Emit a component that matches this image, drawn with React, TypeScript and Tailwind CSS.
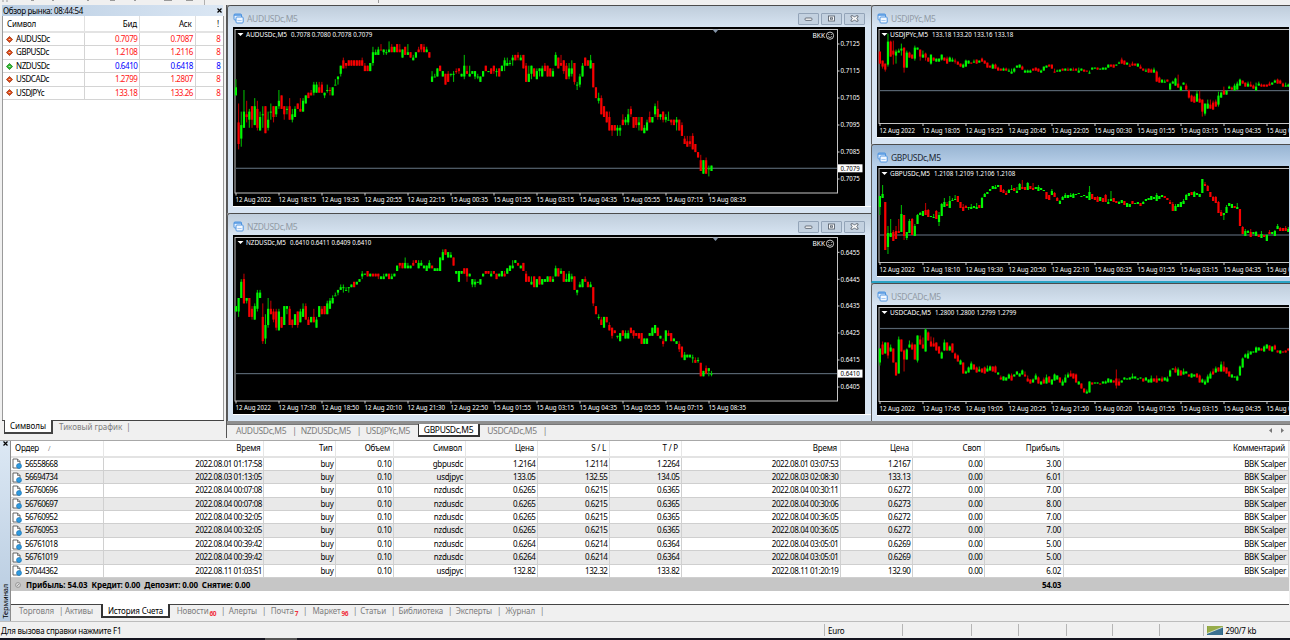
import { Fragment, type ReactNode } from 'react'

interface Candle {
  up: boolean
  high: number
  top: number
  bottom: number
  low: number
}

interface ChartProps {
  symbol: string
  symbolWidth: number
  prices: string
  width: number
  height: number
  plotRight: number
  plotBottom: number
  priceY: number
  unit: number
  candles: string
  times: string[]
  scale?: { label: string; y: number }[]
  current?: string
}

// each token: colour, then high,[body top],[body bottom],[low] relative to the current price
const AUDUSD = `g33,30,27,27 r24,17,9,7 g21,16,11,8 g29,21,15 r25,20,19,17 g22,21,18,15 r23,23,18,15 g26,23,16 r25,22,15,14 g21,19,14
g23,20,20,15 r23,13 g21,18,15,14 g24,21,21,18 r23,23,19,17 g23,23,20,19 g29,25,23,22 r27,22 r23,23,20,18 g23,22,22,20
r26,23,18 g22,20,18,17 g23,22,19 r24,22 r26,22,21 g26,25,21 g27,24 r28,26 r29,28,27 g32,31,28,27
g32,31,28 r32,30,28 r32,31,28 g28,28,27,26 g31,29,29,28 r30,29,29,27 g30,27 g33,31,31 g34,34,33,31 g38,38,35,34
r41,40,37 r39,39,38,37 r40,38 r40,38 r40,38 r40,38 r40,38 r41,40,38 r39,38,36 r38,36
g39,36 g45,43,39,38 g44,43,42 g45,44,42 r46,44,44 g44,44,43,42 g44,43,43,42 g47,44,43 r46,45,43 g45,43
r46,43 r46,44,43 g44,41 r45,42 g46,43,42 r43,41 g42,41,40 g43,41 r45,44,43 r46,46,44,43
r46,45,43 g45,44,43 r43,41 g36,34,32 g35,34,34 g37,34 r38,36 g36,34 r35,31 r36,35,32
g35,35,35,34 g36,35,35,32 r37,36,36,35 r37,37,36,35 g35,34 g42,38,34,33 r38,36,35 g38,35,34 g36,35 g36,36,34,33
g35,34,34,33 g34,32 g36,34 r38,36 g36,36 r37,35 r38,38,36,35 g37,36,36,34 r37,34 g38,36
g41,40,38,36 g41,39,38 g40,39,39,38 g42,41,40,38 r42,40 r43,42,41,40 g42,41,40 r42,37 r39,38,32 g38,35,32
g38,38,35,33 r37,34 g37,36,33 g37,37,36,34 g38,37,34 r39,38,36 r38,34 r37,34 g37,36,34 g43,42,38
r41,37 r42,39,38 r40,40,36,35 r39,38,33 g39,37,34,33 g40,37,35,34 r39,39,32,31 g32,31,31,29 g35,34,31,30 g39,38,34
r41,38 r40,38 g42,40,37 r39,30 r30,26 g28,26,25,24 r27,26,20 r23,19 r21,17 r21,19,14
r16,16,14,12 r16,14 g16,15,14,12 g16,15,14,12 r20,18,16 g19,18,17,16 g22,20,17,16 r23,22,20,19 r19,15 r19,19,16,15
g19,17,16,14 r19,14 g16,15,13 g18,17,14 r21,19,17 g19,17 g24,23,20,19 r25,22,19,18 g20,20,19,18 r21,21,18,17
g20,19,18,17 g21,18,18 r18,18,17,16 r18,16 g19,18,17,14 r18,14 r17,16,12 r12,11,9 r12,10,8 r12,10,9,8
r13,12,7 r9,6 r6,4 r5,3,-1 g3,-2 r4,3,-2 g1,0,0,-3 g1,-1`

const NZDUSD = `g25,23 g28,28,23,21 g35,34,28 r37,35,26 g28,28,27,26 r28,21 r25,24,21,20 g26,25,20 g31,30,24,23 g31,30,28
r26,21,12,11 g22,18,13,11 g28,24,18,17 r27,24,22 r24,23,20,19 r24,23,17,16 g24,23,16 r21,17 g25,18 g25,25,24,22
r25,24,18 r20,20,18,17 g22,18 r23,23,18,17 g24,23,19 g26,24,21 r26,25,20 r21,20,18 g21,19 r24,21,19
g21,20,17 g25,21 r25,24,22 r25,22 g27,26,22 g28,27,24 g29,28,26 g30,29,29 g31,31,30,29 g33,32,31
g33,32,32,30 g32,31,31 g32,32,32,30 g33,32 r34,32 g34,33 g35,34 g38,37,36,35 g37,37 r38,36
g37,36 r37,36 r37,36 r37,37,36,35 g36,35 g37,36,35 g37,36 r37,35 g37,36,35 g37,36
g40,38 r41,41,40,39 r41,39 g43,41,39 g41,40,39 g40,39 r42,41,40 r42,41 g42,41,39 g42,41,40
g40,39 g40,38 g42,41,39 r40,39 g39,38 g39,38 g43,38 g46,45,42 r46,44 g45,43
g45,44,43 r43,40 g38,37 g38,34 g38,37 r39,37 r39,39,36,34 g37,36 g35,35,33,32 g35,34,33,32
g34,34 g35,33 g37,36 r38,37 r38,37 g38,37,36 r38,37 r37,35 g37,36 g38,36
r38,37,36 g39,37 g40,38 g42,40,39 g42,41 r41,40 g40,39 r41,38 r38,37,34 r36,34
g36,34,33 r36,32 g35,32 r36,33 g35,33 g35,34 g36,34 r36,34 g36,35,34 g40,39,36
r39,36 g39,38,37 r38,34 g37,35,34 g38,37,34 g37,36,35,34 r36,31 g31,31,30,29 g34,33,32 g35,32
r36,35,34 r34,32 g34,33,32 r32,32,26,25 r25,22 g22,21,21,20 r21,20,18 g21,17 r21,19 r19,18,16
r17,17,14,13 r16,15 g14,14,14,13 g15,12 r16,14 g16,15,13 g16,15,13 r17,15 r16,16,14,13 r15,14
r15,13 r15,11 g13,11 g13,11 g15,14 g17,14 g18,15 r17,14 g14,13 r13,12,11,10
g16,12 r16,15,14 r15,12 g13,12 g12,11 r12,11,9,8 r10,6 g8,7,5 g7,6 g7,6
g7,6,6,4 r6,5,4 g6,5,5,4 r4,-1 g1,-1 r3,2,0 g2,2,1,-1 g1,0,0,-1`

const USDJPY = `r39,27 r30,30,24,22 r27,27,21,19 g57,49,26,24 r50,49,34 r50,40,36,26 g41,39,35,27 g42,40,38 g47,42,40,35 r43,43,23,18
g40,38,23 r39,38,33 r36,32 g45,43,32,30 g43,41 r41,41,34,30 g40,36,33 r38,37,33,30 r33,29 g36,36,27,26
r33,30 g32,29 g32,29 g36,36,31,30 r33,30 r34,32,27 g34,33,29 g33,31,29 r32,30,29,27 r29,26
r27,24 g27,26,23 g31,30,24 g30,27 r28,27 g31,29,28 r31,27 g30,28 r33,32,29 r30,27
r28,23 r25,23 g27,26,22 r27,26,22 r24,23,20 r22,20 g23,22,20 r23,22,20 g22,20,19 g22,19,17
g23,22,19,18 g25,23 g26,23 r25,24,21 g21,20,18 g21,20,18 g21,20,18 r22,20 r23,20 r22,19
g21,20,18 g24,20 g25,23 r26,24 r26,22 r22,19,18 g21,20,19 g21,19 r22,20 g22,20
r23,21,20 g22,20 r23,21,20 r22,20 g23,20,18 g22,20 r21,19 r20,19 g20,18,17 g23,21
g23,22 r23,21 g22,21 g23,21 g23,21 g26,23 r26,24 r26,23 g26,25 g29,28,27
r33,31,27 r30,26 g28,26 r27,25,24 r29,27,25 r27,25 g27,24 r26,24,22 r22,20 g22,20,19
r22,18 r22,21,18 g23,21,18 r20,19,9 r14,13,8 g11,8 g11,9,8 r11,9 g8,7,1 g10,9,7
g13,12,5 r16,7,3 g5,4,0 g8,6 r7,5,1 r1,0,-7,-8 r-4,-5,-11 r-5,-6,-12 g0,-3,-11 r0,-8,-12
r-9,-9,-21,-26 g-13,-13,-23,-25 g-9,-13,-18 r-9,-14,-18 r-10,-12,-19 r-9,-11,-16 g-1,-5,-14,-16 g-1,-2,-7 r4,0,-4 g0,-4
g5,4,2 r4,3,1 g7,5,0 g9,7,1 g12,11,5 r10,7 r8,4 g9,7,4 r9,6,4 r6,5,2
g8,4,0 g9,7,5 r7,6,4 r6,4 r6,4 r9,7,5 g8,6 g11,10,8 r12,11,7 r11,10,7
r8,7,4 g8,5,4 g7,6,4`

const GBPUSD = `g39,39,28,20 g50,41,37 r33,33,-15 g9,2,-12,-19 g16,2,-2 r5,3,-6 r9,4,-4 r16,4,2 g30,21,3 r20,20,-1,-5
g3,3,-3,-5 g16,14,2 r17,16,0 g11,9,-1 g21,20,11 g23,22,20 g24,19 r32,25,20 r26,25,18 g19,18
g21,18,17 r25,24,16 g23,20,13,9 g32,31,19 g37,33,28 r33,31,29 g39,34,27 g37,35,34 g40,36,35 r39,33
r33,27 r31,28,24 r30,29,27 g28,28,27,25 g31,28,26 g29,27 g32,28,26 r30,27 g38,37,27 g42,41,38
g43,41 g46,44 g49,46 g50,48,46 g50,48 r50,43 r46,45,42 r44,42,40 g46,45,42 g50,46,45
r47,44 g48,44,42 g52,51,45 r55,48,46 r48,45 g53,52,45 r49,46 r52,47,45 g48,46 g50,48,44
g47,45 g45,44 r43,36 r40,35 g46,44,40 r43,42,38 r38,37,34 g35,34,31 g39,38,35 g42,40,37
g40,37 g42,40,38 g42,41,37 g41,40 g42,41 g39,38 g40,39 g39,37 g49,43,35 r41,36
r38,35 r39,38,33 g38,34 r37,33 r41,40,33 g36,33,31 g44,36,34 r37,33 r34,32 g34,33,31
g35,32 r34,30 g32,28 g31,28 r34,31 g32,31 g33,31 r32,29 g34,33,31 g36,34
g37,35 g39,35 g38,36 g42,40,34 g39,36 g40,38 r39,37 r37,35 r35,33,31 r33,31,24
g31,29,24 g31,28 g33,28 g36,34,31 g41,40,35 g42,39 r43,40 g44,43,38 g42,40 g41,38
g56,56,42 r53,51,49 r50,49,44 r43,38 r39,38,34 r39,38,32 r34,33,22 r25,23,19 g22,22,20,15 g30,28,22
g32,29 g31,27 r29,27 g32,28,26 r26,9 r9,8,1 g6,4,-1 g5,4,2 r6,3,-2 g3,1
g4,3,-1 r1,0,-2 g4,1,-3 r0,-2 g1,0,-6 r5,3,1 g3,1 g5,4,-1 g11,9,6 r8,7,4
r7,4 r9,7,4 g8,6,3`

const USDCAD = `g-20,-20,-34,-37 r-13,-16,-26 g-14,-25 r-14,-14,-27,-30 g-16,-19,-23 r-20,-34 r-34,-47 g-8,-11,-45 r-11,-23 r-21,-22,-31,-43
g-20,-21,-31 g-12,-16,-19 r-14,-16,-21 r-16,-31 g-7,-7,-32,-34 r-7,-11,-16 r-9,-16,-20 g0,-1,-23 r-3,-4,-12 r-8,-13,-18
r-9,-15,-18 r-14,-22 r-18,-25 g-23,-24,-30 g-11,-14,-22 r-14,-22 g-17,-18,-22 r-15,-24 r-24,-25,-30 r-26,-27,-33
g-31,-32,-36 r-34,-45 g-42,-43,-45 g-38,-39,-44 g-33,-35,-41 r-36,-41 r-38,-39,-44 g-38,-41,-43 r-40,-44 r-38,-39,-45
g-37,-40,-43 g-37,-38,-42 r-38,-43 r-37,-38,-44 g-44,-46 r-47,-49,-51 g-48,-52 g-49,-52 g-45,-46,-50 r-45,-47,-52
g-46,-48 g-43,-46 g-45,-48 g-41,-42,-46 r-43,-46,-48 r-47,-50,-53 r-51,-55 g-50,-51,-54 g-45,-47,-51 r-48,-49,-55
g-53,-56 r-49,-51,-55 g-46,-49,-55 r-48,-54 g-51,-56 g-45,-46,-52 g-47,-51 r-49,-54 g-51,-53,-57 g-46,-49,-54
g-44,-46,-49 r-42,-45,-48 r-45,-50 r-45,-46,-54 g-53,-56 r-55,-60 r-60,-64 g-61,-63,-65 g-53,-64 r-54,-56
g-54,-55 g-54,-55 r-55,-56 g-53,-55 g-52,-53,-55 g-50,-54 g-51,-54 r-52,-54 r-41,-50,-57,-60 r-50,-53,-57
g-52,-54 g-49,-51 g-50,-51 g-49,-51 g-45,-48,-50 g-48,-50 g-50,-51 g-49,-50 r-50,-53 g-49,-52
g-51,-54 g-47,-50,-54 r-50,-53 r-47,-50,-54 g-50,-52 r-48,-50,-53 g-49,-52 g-48,-50,-53 g-41,-42,-48 g-40,-41
r-38,-40,-44 g-39,-41,-47 r-42,-47 g-40,-43,-46 g-43,-45 r-46,-48 g-45,-49 g-46,-48 r-45,-49 r-46,-47,-54
g-50,-51,-54 g-51,-53,-56 g-46,-48,-54 g-43,-45,-50 r-40,-43,-46 g-38,-40,-44 r-39,-43 g-33,-36,-43 r-33,-38,-43 r-39,-45
r-43,-48 g-46,-49 g-48,-49 g-47,-48,-52 g-37,-38,-47 g-29,-30,-39 g-25,-26,-29 g-22,-25,-30 g-23,-26 g-23,-24
g-18,-19,-24 g-19,-22 r-20,-22 g-17,-18,-23 g-16,-20 r-17,-22 g-18,-23 r-16,-17,-21 r-22,-24 g-22,-25
r-23,-24 r-22,-24 r-20,-22`

function parseCandles(source: string): Candle[] {
  return source.split(/\s+/).map((token) => {
    const n = token.slice(1).split(',').map(Number)
    const up = token[0] === 'g'
    if (n.length === 2) return { up, high: n[0], top: n[0], bottom: n[1], low: n[1] }
    if (n.length === 3) return { up, high: n[0], top: n[1], bottom: n[2], low: n[2] }
    return { up, high: n[0], top: n[1], bottom: n[2], low: n[3] }
  })
}

function Chart(props: ChartProps) {
  const { width, height, plotRight, plotBottom, priceY, unit } = props
  const y = (v: number) => priceY - v * unit

  return (
    <svg
      width={width}
      height={height}
      viewBox={`0 0 ${width} ${height}`}
      className="block bg-black font-['Noto_Sans',sans-serif] text-[7.2px]"
    >
      <rect x="2" y="2.5" width={plotRight - 2} height={plotBottom - 2.5} fill="none" stroke="#c4c4c4" />
      <rect x="2.5" y={priceY - 0.6} width={plotRight - 3} height="1.2" fill="#56636f" />
      {parseCandles(props.candles).map((c, i) => {
        const x = 2.9 + i * 2.687
        return (
          <Fragment key={i}>
            <rect x={x - 0.55} y={y(c.high)} width="1.1" height={Math.max((c.high - c.low) * unit, 1)} fill={c.up ? '#00b400' : '#b40000'} />
            <rect x={x - 1.1} y={y(c.top)} width="2.2" height={Math.max((c.top - c.bottom) * unit, 1)} fill={c.up ? '#00f800' : '#f80000'} />
          </Fragment>
        )
      })}
      <path d="M4.5 6h6l-3 3z" fill="#fff" />
      <text x="13" y="10.4" fill="#fff" fontSize="7" textLength={props.symbolWidth} lengthAdjust="spacingAndGlyphs">{props.symbol}</text>
      <text x={props.symbolWidth + 17} y="10.4" fill="#fff" fontSize="7" textLength="81.3" lengthAdjust="spacingAndGlyphs">{props.prices}</text>
      {props.times.map((time, i) => (
        <Fragment key={time}>
          <rect x={2.5 + i * 43} y={plotBottom} width="1" height="2.5" fill="#d0d0d0" />
          <text x={2.4 + i * 43} y={plotBottom + 9} fill="#fff" textLength={i === 0 ? 35.6 : 37.6} lengthAdjust="spacingAndGlyphs">{time}</text>
        </Fragment>
      ))}
      {props.scale && (
        <>
          <path d="M479.5 2.5h6l-3 3.5z" fill="#8494a8" />
          <text x="579.5" y="11" fill="#fff" fontSize="7" textLength="12.5" lengthAdjust="spacingAndGlyphs">BKK</text>
          <circle cx="597" cy="8.7" r="3.6" fill="none" stroke="#ddd" strokeWidth="0.9" />
          <path d="M595.3 7.5h1M597.8 7.5h1M595 9.5q2 2.2 4 0" fill="none" stroke="#ddd" strokeWidth="0.8" />
          {props.scale.map((s) => (
            <Fragment key={s.label}>
              <rect x={plotRight} y={s.y - 0.5} width="2" height="1" fill="#d0d0d0" />
              <text x="607.5" y={s.y + 2.3} fill="#fff" textLength="19.2" lengthAdjust="spacingAndGlyphs">{s.label}</text>
            </Fragment>
          ))}
          <rect x="605" y={priceY - 4} width="24.5" height="8" fill="#fff" />
          <text x="607.5" y={priceY + 2.5} fill="#000" textLength="19.2" lengthAdjust="spacingAndGlyphs">{props.current}</text>
        </>
      )}
    </svg>
  )
}

function WindowIcon() {
  return (
    <svg width="11" height="11" viewBox="0 0 11 11" className="shrink-0">
      <rect x="1" y="1" width="7.5" height="6" rx="1" fill="#eaf3ff" stroke="#4e94e0" />
      <path d="M1 2h7.5" stroke="#4e94e0" strokeWidth="1.3" />
      <rect x="3" y="4" width="7.2" height="6" rx="1" fill="#f3f8ff" stroke="#4e94e0" />
      <path d="M4.5 7l1 1 1-1 1 1 1-1" stroke="#6fa8e8" strokeWidth="0.7" fill="none" />
    </svg>
  )
}

function WindowButton({ children }: { children: ReactNode }) {
  return (
    <div className="flex h-3 w-[21.5px] items-center justify-center rounded-[1px] border border-[#93a4b8] bg-[#c3d1e0]">
      <svg width="9" height="7" viewBox="0 0 9 7" fill="#f8f8f8" stroke="#5b6470" strokeWidth="0.9">{children}</svg>
    </div>
  )
}

function ChartWindow({ title, active, controls, className, children }: { title: string; active?: boolean; controls?: boolean; className: string; children: ReactNode }) {
  return (
    <div
      className={`flex flex-col overflow-hidden rounded-tl-[4px] border-t border-l border-t-[#4c4c4c] border-l-[#5a5a5a] ${
        active ? 'bg-[#b9d1ea]' : 'bg-[#d7e4f2]'
      } ${className}`}
    >
      <div
        className={`flex h-[20.5px] shrink-0 items-center bg-linear-to-b pt-[5px] pr-[6px] pl-[5px] ${
          active ? 'from-[#98b4d2] to-[#b9d1ea]' : 'from-[#bfcddb] to-[#d7e4f2]'
        }`}
      >
        <WindowIcon />
        <span className={`ml-[3px] flex-1 text-[8.5px] leading-[12px] tracking-[-0.32px] ${active ? 'text-[#1c2733]' : 'text-[#929ba5]'}`}>{title}</span>
        {controls && (
          <div className="flex gap-[1.5px]">
            <WindowButton><rect x="1" y="3" width="7" height="2.4" rx="1" /></WindowButton>
            <WindowButton><rect x="1.5" y="1" width="6" height="5" /><rect x="3.5" y="2.8" width="2" height="1.4" /></WindowButton>
            <WindowButton><path d="M1 .8h2.200l1.300 1.400L5.800.8H8v1.400L6.600 3.500 8 4.800v1.400H5.800L4.500 4.800 3.200 6.200H1V4.800l1.400-1.300L1 2.200z" /></WindowButton>
          </div>
        )}
      </div>
      <div className="ml-[5px] shrink-0 overflow-hidden border-b border-b-white">{children}</div>
    </div>
  )
}

const quotes = [
  { symbol: 'AUDUSDc', bid: '0.7079', ask: '0.7087', up: false },
  { symbol: 'GBPUSDc', bid: '1.2108', ask: '1.2116', up: false },
  { symbol: 'NZDUSDc', bid: '0.6410', ask: '0.6418', up: true },
  { symbol: 'USDCADc', bid: '1.2799', ask: '1.2807', up: false },
  { symbol: 'USDJPYc', bid: '133.18', ask: '133.26', up: false },
]

function MarketWatch() {
  return (
    <div className="flex w-[226px] shrink-0 flex-col bg-[#f0f0f0] pl-[2px]">
      <div className="flex h-[11px] w-[221px] items-center justify-between bg-linear-to-r from-[#b9cde2] to-[#dbe7f4] pr-[1px] pl-[1px] text-[8px] tracking-[-0.32px]">
        <span>Обзор рынка: 08:44:54</span>
        <svg width="5" height="5" viewBox="0 0 5 5" stroke="#000" strokeWidth="1.2"><path d="M.5.5l4 4M4.500.5l-4 4" /></svg>
      </div>
      <div className="flex w-[222px] flex-1 flex-col border-x border-[#9a9a9a] bg-white">
        <div className="grid h-[17px] grid-cols-[81.500px_55.500px_55.500px_1fr] border-b-2 border-[#e3e3e3] text-right text-[8px] leading-[15px] tracking-[-0.2px]">
          <span className="border-r border-[#e0e0e0] pl-1 text-left">Символ</span>
          <span className="border-r border-[#e0e0e0] pr-[2px]">Бид</span>
          <span className="border-r border-[#e0e0e0] pr-[3px]">Аск</span>
          <span className="pr-1">!</span>
        </div>
        {quotes.map((q) => (
          <div
            key={q.symbol}
            className={`grid h-[13.4px] grid-cols-[81.500px_55.500px_55.500px_1fr] border-b border-[#d4d4d4] text-right text-[8px] leading-[12.500px] tracking-[-0.42px] ${q.up ? 'text-[#0000ff]' : 'text-[#ff1414]'}`}
          >
            <span className="flex items-center border-r border-[#d4d4d4] pl-[2.500px] text-black">
              <svg width="7" height="7" viewBox="0 0 8 8" className="mr-[3.500px]">
                <path d="M4 .5L7.500 4 4 7.500.5 4z" fill={q.up ? '#2db82d' : '#dd4a16'} stroke={q.up ? '#168016' : '#9c300c'} strokeWidth="0.9" />
                <path d="M3 4h2" stroke="#fff" strokeWidth="0.8" />
              </svg>
              {q.symbol}
            </span>
            <span className="border-r border-[#d4d4d4] pr-[1.500px]">{q.bid}</span>
            <span className="border-r border-[#d4d4d4] pr-[1.500px]">{q.ask}</span>
            <span className="pr-[2.500px]">8</span>
          </div>
        ))}
      </div>
      <div className="flex h-[20px] w-[222px] items-start text-[8px] tracking-[-0.03px]">
        <div className="w-[2px] self-start border-t border-[#444] pt-3" />
        <div className="h-[14px] w-[49px] border-r-2 border-b-2 border-l border-[#444] bg-white text-center leading-[12.500px]">Символы</div>
        <div className="h-[13px] flex-1 border-t border-[#444] pl-[6px] leading-[12px] text-[#7d7d7d]">
          Тиковый график<span className="ml-[4px] text-[#777]">|</span>
        </div>
      </div>
    </div>
  )
}

const bigChart = { width: 632, height: 179, plotRight: 604.5, plotBottom: 166, unit: 2.7 }
const smallChart = { width: 412, height: 110, plotRight: 430, plotBottom: 96.5, unit: 1 }

function Workspace() {
  return (
    <div className="flex h-[419px] overflow-hidden border-l border-[#555] bg-[#8f8f8f]">
      <div className="flex w-[644px] shrink-0 flex-col">
        <ChartWindow title="AUDUSDc,M5" controls className="h-[208px]">
          <Chart
            {...bigChart}
            symbol="AUDUSDc,M5"
            symbolWidth={41}
            prices="0.7078 0.7080 0.7078 0.7079"
            priceY={141.3}
            candles={AUDUSD}
            current="0.7079"
            times={['12 Aug 2022', '12 Aug 18:15', '12 Aug 19:35', '12 Aug 20:55', '12 Aug 22:15', '15 Aug 00:35', '15 Aug 01:55', '15 Aug 03:15', '15 Aug 04:35', '15 Aug 05:55', '15 Aug 07:15', '15 Aug 08:35']}
            scale={[
              { label: '0.7125', y: 17 },
              { label: '0.7115', y: 44 },
              { label: '0.7105', y: 71 },
              { label: '0.7095', y: 98 },
              { label: '0.7085', y: 125 },
              { label: '0.7075', y: 152 },
            ]}
          />
        </ChartWindow>
        <ChartWindow title="NZDUSDc,M5" controls className="h-[208px]">
          <Chart
            {...bigChart}
            symbol="NZDUSDc,M5"
            symbolWidth={40}
            prices="0.6410 0.6411 0.6409 0.6410"
            priceY={138.6}
            candles={NZDUSD}
            current="0.6410"
            times={['12 Aug 2022', '12 Aug 17:30', '12 Aug 18:50', '12 Aug 20:10', '12 Aug 21:30', '12 Aug 22:50', '15 Aug 01:55', '15 Aug 03:15', '15 Aug 04:35', '15 Aug 05:55', '15 Aug 07:15', '15 Aug 08:35']}
            scale={[
              { label: '0.6455', y: 17.3 },
              { label: '0.6445', y: 44.3 },
              { label: '0.6435', y: 71 },
              { label: '0.6425', y: 98 },
              { label: '0.6415', y: 125 },
              { label: '0.6405', y: 152 },
            ]}
          />
        </ChartWindow>
      </div>
      <div className="flex flex-1 flex-col">
        <ChartWindow title="USDJPYc,M5" className="h-[139px]">
          <Chart
            {...smallChart}
            symbol="USDJPYc,M5"
            symbolWidth={38}
            prices="133.18 133.20 133.16 133.18"
            priceY={63.6}
            candles={USDJPY}
            times={['12 Aug 2022', '12 Aug 18:05', '12 Aug 19:25', '12 Aug 20:45', '12 Aug 22:05', '15 Aug 00:30', '15 Aug 01:55', '15 Aug 03:15', '15 Aug 04:35', '15 Aug 05:55']}
          />
        </ChartWindow>
        <ChartWindow title="GBPUSDc,M5" active className="h-[139px] border-b-2 border-b-[#2aa3c4]">
          <Chart
            {...smallChart}
            symbol="GBPUSDc,M5"
            symbolWidth={40}
            prices="1.2108 1.2109 1.2106 1.2108"
            priceY={69}
            candles={GBPUSD}
            times={['12 Aug 2022', '12 Aug 18:10', '12 Aug 19:30', '12 Aug 20:50', '12 Aug 22:10', '15 Aug 00:35', '15 Aug 01:55', '15 Aug 03:15', '15 Aug 04:35', '15 Aug 05:55']}
          />
        </ChartWindow>
        <ChartWindow title="USDCADc,M5" className="h-[138px]">
          <Chart
            {...smallChart}
            symbol="USDCADc,M5"
            symbolWidth={41}
            prices="1.2800 1.2800 1.2799 1.2799"
            priceY={23.5}
            candles={USDCAD}
            times={['12 Aug 2022', '12 Aug 17:45', '12 Aug 19:05', '12 Aug 20:25', '12 Aug 21:50', '15 Aug 00:20', '15 Aug 01:55', '15 Aug 03:15', '15 Aug 04:35', '15 Aug 05:55']}
          />
        </ChartWindow>
      </div>
    </div>
  )
}

function ChartTabs() {
  return (
    <div className="flex h-[14px] border-l border-[#555] text-[8.500px] leading-[11px] tracking-[-0.36px] text-[#7d7d7d]">
      <div className="w-[69.500px] border-t border-[#777] text-right"><span className="pr-[6px]">AUDUSDc,M5</span><span>|</span></div>
      <div className="w-[64.500px] border-t border-[#777] text-right"><span className="pr-[6px]">NZDUSDc,M5</span><span>|</span></div>
      <div className="w-[57px] border-t border-[#777] text-right"><span className="pr-[8px]">USDJPYc,M5</span></div>
      <div className="h-[13px] w-[62px] border-r-2 border-b-2 border-l border-[#333] bg-white text-center leading-[12px] text-black">GBPUSDc,M5</div>
      <div className="w-[67px] border-t border-[#777] text-right"><span className="pr-[6px]">USDCADc,M5</span><span>|</span></div>
      <div className="flex flex-1 items-center justify-end gap-[9px] border-t border-[#777] pr-[6px] pb-[3px]">
        <svg width="3" height="5" viewBox="0 0 3 5"><path d="M3 0v5L0 2.500z" fill="#777" /></svg>
        <svg width="3" height="5" viewBox="0 0 3 5"><path d="M0 0v5l3-2.500z" fill="#777" /></svg>
      </div>
    </div>
  )
}

const headers = ['Ордер', 'Время', 'Тип', 'Объем', 'Символ', 'Цена', 'S / L', 'T / P', 'Время', 'Цена', 'Своп', 'Прибыль', 'Комментарий']

const orders = [
  ['56558668', '2022.08.01 01:17:58', 'buy', '0.10', 'gbpusdc', '1.2164', '1.2114', '1.2264', '2022.08.01 03:07:53', '1.2167', '0.00', '3.00', 'BBK Scalper'],
  ['56694734', '2022.08.03 01:13:05', 'buy', '0.10', 'usdjpyc', '133.05', '132.55', '134.05', '2022.08.03 02:08:30', '133.13', '0.00', '6.01', 'BBK Scalper'],
  ['56760696', '2022.08.04 00:07:08', 'buy', '0.10', 'nzdusdc', '0.6265', '0.6215', '0.6365', '2022.08.04 00:30:11', '0.6272', '0.00', '7.00', 'BBK Scalper'],
  ['56760697', '2022.08.04 00:07:08', 'buy', '0.10', 'nzdusdc', '0.6265', '0.6215', '0.6365', '2022.08.04 00:30:06', '0.6273', '0.00', '8.00', 'BBK Scalper'],
  ['56760952', '2022.08.04 00:32:05', 'buy', '0.10', 'nzdusdc', '0.6265', '0.6215', '0.6365', '2022.08.04 00:36:05', '0.6272', '0.00', '7.00', 'BBK Scalper'],
  ['56760953', '2022.08.04 00:32:05', 'buy', '0.10', 'nzdusdc', '0.6265', '0.6215', '0.6365', '2022.08.04 00:36:05', '0.6272', '0.00', '7.00', 'BBK Scalper'],
  ['56761018', '2022.08.04 00:39:42', 'buy', '0.10', 'nzdusdc', '0.6264', '0.6214', '0.6364', '2022.08.04 03:05:01', '0.6269', '0.00', '5.00', 'BBK Scalper'],
  ['56761019', '2022.08.04 00:39:42', 'buy', '0.10', 'nzdusdc', '0.6264', '0.6214', '0.6364', '2022.08.04 03:05:01', '0.6269', '0.00', '5.00', 'BBK Scalper'],
  ['57044362', '2022.08.11 01:03:51', 'buy', '0.10', 'usdjpyc', '132.82', '132.32', '133.82', '2022.08.11 01:20:19', '132.90', '0.00', '6.02', 'BBK Scalper'],
]

const orderGrid = 'grid grid-cols-[93px_160px_72px_57.500px_72px_72px_72px_72px_159px_72px_72px_79px_225px]'

const terminalTabs = [
  { label: 'Торговля', width: 'w-[51px]' },
  { label: 'Активы', width: 'w-[39px]' },
  { label: 'История Счета', width: 'w-[69px]', active: true },
  { label: 'Новости', width: 'w-[54px]', count: '60' },
  { label: 'Алерты', width: 'w-[41px]' },
  { label: 'Почта', width: 'w-[41px]', count: '7' },
  { label: 'Маркет', width: 'w-[50px]', count: '96' },
  { label: 'Статьи', width: 'w-[38px]' },
  { label: 'Библиотека', width: 'w-[57px]' },
  { label: 'Эксперты', width: 'w-[49px]' },
  { label: 'Журнал', width: 'w-[43px]' },
]

function Terminal() {
  return (
    <div className="flex h-[181px] border-t border-[#a8a8a8] text-[8px]">
      <div className="flex w-[10px] shrink-0 flex-col items-center justify-between bg-linear-to-b from-[#dce8f4] to-[#b6cadf] pb-[2px]">
        <svg width="5" height="5" viewBox="0 0 5 5" stroke="#000" strokeWidth="1.2"><path d="M.5.5l4 4M4.500.5l-4 4" /></svg>
        <span className="rotate-180 text-[7.500px] leading-[10px] tracking-[-0.2px] [writing-mode:vertical-rl]">Терминал</span>
      </div>
      <div className="flex w-[1279px] flex-col border-l border-[#8c8c8c]">
        <div className="flex h-[163px] flex-col bg-white">
          <div className={`${orderGrid} h-[16.500px] shrink-0 border-b-2 border-[#e3e3e3] text-right leading-[14.500px] tracking-[-0.2px]`}>
            {headers.map((header, i) => (
              <span key={i} className={i === 0 ? 'border-r border-[#e6e6e6] pl-1 text-left' : 'border-r border-[#e6e6e6] pr-[2.500px]'}>
                {header}
                {i === 0 && <span className="ml-[9px] text-[7px] text-[#777]">∕</span>}
              </span>
            ))}
          </div>
          {orders.map((order) => (
            <div key={order[0]} className={`${orderGrid} h-[13.4px] shrink-0 border-b border-[#cfcfcf] text-right leading-[12.400px] tracking-[-0.42px] even:bg-white odd:bg-[#e9e9e9]`}>
              {order.map((cell, i) =>
                i === 0 ? (
                  <span key={i} className="flex items-center border-r border-[#d0d0d0] pl-[1px] tracking-[-0.52px]">
                    <svg width="10" height="11" viewBox="0 0 10 11" className="mr-[3px]">
                      <path d="M1 1h4.500L8 3.500V10H1z" fill="#fff" stroke="#555" strokeWidth="0.9" />
                      <path d="M5.500 1v2.500H8" fill="none" stroke="#555" strokeWidth="0.7" />
                      <circle cx="7" cy="8" r="2.500" fill="#2e9be0" stroke="#1b6fae" strokeWidth="0.6" />
                    </svg>
                    {cell}
                  </span>
                ) : (
                  <span key={i} className={i > 10 || i === 2 || i === 4 ? 'border-r border-[#d0d0d0] pr-[1.500px] tracking-[-0.28px]' : 'border-r border-[#d0d0d0] pr-[1px]'}>{cell}</span>
                ),
              )}
            </div>
          ))}
          <div className="flex h-[13px] shrink-0 items-center bg-[#c6c6c6] pl-[4px] font-bold tracking-[-0.1px]">
            <svg width="6" height="6" viewBox="0 0 6 6" className="mr-[5px]"><circle cx="3" cy="3" r="2.400" fill="#ddd" stroke="#888" strokeWidth="0.8" /><path d="M2 4l2-2" stroke="#777" strokeWidth="0.7" /></svg>
            <span className="w-[1007px] whitespace-pre">Прибыль: 54.03  Кредит: 0.00  Депозит: 0.00  Снятие: 0.00</span>
            <span className="w-[28px] text-right tracking-[-0.3px]">54.03</span>
          </div>
        </div>
        <div className="flex h-[17px] tracking-[-0.1px] text-[#7d7d7d]">
          {terminalTabs.map((tab) =>
            tab.active ? (
              <div key={tab.label} className={`${tab.width} h-[14px] shrink-0 border-r-2 border-b-2 border-l-2 border-[#333] bg-white text-center leading-[13px] tracking-[-0.15px] text-black`}>{tab.label}</div>
            ) : (
              <div key={tab.label} className={`${tab.width} flex shrink-0 justify-end border-t border-[#444] leading-[11px]`}>
                <span>{tab.label}</span>
                {tab.count && <span className="mt-[3px] ml-px text-[6.500px] font-bold tracking-[-0.5px] text-[#f0303c]">{tab.count}</span>}
                <span className="ml-[5px] w-[3px]">{tab.label !== 'Активы' && '|'}</span>
              </div>
            ),
          )}
          <div className="flex-1 border-t border-[#444]" />
        </div>
      </div>
    </div>
  )
}

function StatusBar() {
  return (
    <div className="flex h-[17px] border-t border-[#bdbdbd] py-[2px] text-[8px] leading-[13px] tracking-[-0.23px]">
      <div className="w-[824px] pl-[1px]">Для вызова справки нажмите F1</div>
      <div className="w-[78px] border-l border-[#b5b5b5] pl-[3px]">Euro</div>
      <div className="w-[69px] border-l border-[#b5b5b5]" />
      <div className="w-[47px] border-l border-[#b5b5b5]" />
      <div className="w-[48px] border-l border-[#b5b5b5]" />
      <div className="w-[46px] border-l border-[#b5b5b5]" />
      <div className="w-[47px] border-l border-[#b5b5b5]" />
      <div className="w-[44px] border-l border-[#b5b5b5]" />
      <div className="flex items-center border-l border-[#b5b5b5] pl-[3px]">
        <svg width="16" height="9" viewBox="0 0 16 9" className="mr-[2.500px]">
          <rect width="16" height="9" fill="#8fa63c" />
          <path d="M0 9V7.500L16 1v8z" fill="#2c6689" />
          <path d="M0 7.500L16 1" stroke="#e8eed8" strokeWidth="0.8" />
          <path d="M2 0v9M4 0v9M6 0v9M8 0v9M10 0v9M12 0v9M14 0v9" stroke="#fff" strokeOpacity="0.25" strokeWidth="0.6" />
        </svg>
        290/7 kb
      </div>
    </div>
  )
}

export default function App() {
  return (
    <div className="flex h-[640px] w-[1290px] flex-col overflow-hidden bg-[#f0f0f0] font-['Noto_Sans','Open_Sans',sans-serif] text-black">
      <div className="flex h-[5px] items-start">
        <div className="h-[5px] w-[205px] border-r border-[#b0b0b0]">
          <svg width="200" height="3" viewBox="0 0 200 3" stroke="#999"><path d="M3 0v2M7 0v2M31 .5h3M52 .5h2M87 .5h2M110 .5h5M134 .5h2M164 .5h8M186 .5h7" /></svg>
        </div>
        <div className="h-[3px] w-[174px] border-r border-[#999]" />
      </div>
      <div className="flex h-[435px]">
        <MarketWatch />
        <div className="flex min-w-0 flex-1 flex-col">
          <Workspace />
          <ChartTabs />
        </div>
      </div>
      <Terminal />
      <StatusBar />
      <div className="flex h-[2px] bg-[#14141f]">
        <div className="ml-[265px] w-[32px] bg-[#555]" />
      </div>
    </div>
  )
}
